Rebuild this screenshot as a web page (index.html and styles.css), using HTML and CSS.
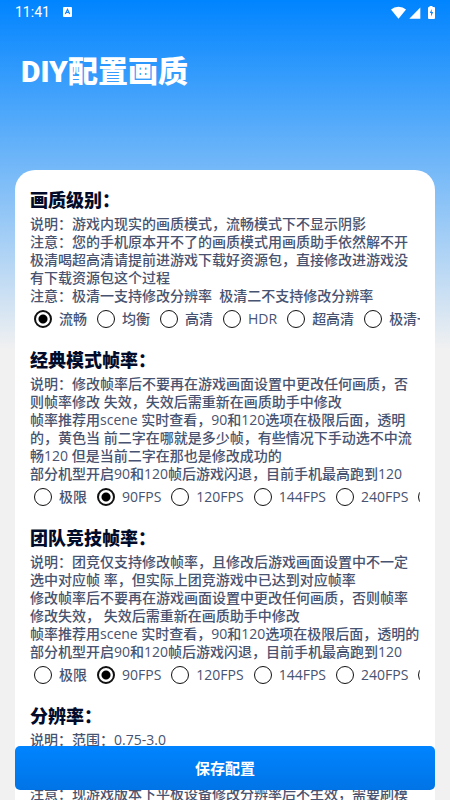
FILE: index.html
```html
<!DOCTYPE html>
<html lang="zh-CN">
<head>
    <meta charset="UTF-8">
    <meta name="viewport" content="width=device-width, initial-scale=1.0">
    <title>DIY配置画质</title>
    <link rel="stylesheet" href="styles.css">
</head>
<body>
<div class="app">
    <div class="status-bar">
        <span>11:41</span>
        <svg class="status-app" width="9" height="10" viewBox="0 0 9 10">
            <rect width="9" height="10" rx="1" fill="#fff"/>
            <path d="M2.3 7 4.5 2.4 6.7 7M3.2 5.5h2.6" fill="none" stroke="#1685f5" stroke-width="1.2"/>
        </svg>
        <svg class="status-icons" width="44" height="13" viewBox="0 0 44 13">
            <path d="M0 3.5Q3 .8 7.500.8T15 3.500L7.500 12.700Z" fill="#fff"/>
            <path d="M29.300 1.500V12.700H18.300Z" fill="#fff"/>
            <path d="M38.500 1V0h3v1h1.500q1 0 1 1v10q0 1-1 1h-5q-1 0-1-1V2q0-1 1-1Z" fill="#fff"/>
            <path d="M40.700 3 38.800 7h1.300v3.500L42.200 6h-1.500Z" fill="#1685f5"/>
        </svg>
    </div>

    <h1>DIY配置画质</h1>

    <form class="card">
        <section>
            <h2>画质级别：</h2>
            <p>说明：游戏内现实的画质模式，流畅模式下不显示阴影<br>
            注意：您的手机原本开不了的画质模式用画质助手依然解不开极清喝超高清请提前进游戏下载好资源包，直接修改进游戏没有下载资源包这个过程<br>
            注意：极清一支持修改分辨率&nbsp; 极清二不支持修改分辨率</p>
            <div class="options">
                <label><input type="radio" name="quality" checked>流畅</label>
                <label><input type="radio" name="quality">均衡</label>
                <label><input type="radio" name="quality">高清</label>
                <label><input type="radio" name="quality">HDR</label>
                <label><input type="radio" name="quality">超高清</label>
                <label><input type="radio" name="quality">极清一</label>
            </div>
        </section>

        <section>
            <h2>经典模式帧率：</h2>
            <p>说明：修改帧率后不要再在游戏画面设置中更改任何画质，否则帧率修改 失效，失效后需重新在画质助手中修改<br>
            帧率推荐用scene 实时查看，90和120选项在极限后面，透明的，黄色当 前二字在哪就是多少帧，有些情况下手动选不中流畅120 但是当前二字在那也是修改成功的<br>
            部分机型开启90和120帧后游戏闪退，目前手机最高跑到120</p>
            <div class="options">
                <label><input type="radio" name="classic">极限</label>
                <label><input type="radio" name="classic" checked>90FPS</label>
                <label><input type="radio" name="classic">120FPS</label>
                <label><input type="radio" name="classic">144FPS</label>
                <label><input type="radio" name="classic">240FPS</label>
                <label><input type="radio" name="classic"></label>
            </div>
        </section>

        <section>
            <h2>团队竞技帧率：</h2>
            <p>说明：团竞仅支持修改帧率，且修改后游戏画面设置中不一定选中对应帧 率，但实际上团竞游戏中已达到对应帧率<br>
            修改帧率后不要再在游戏画面设置中更改任何画质，否则帧率修改失效， 失效后需重新在画质助手中修改<br>
            帧率推荐用scene 实时查看，90和120选项在极限后面，透明的<br>
            部分机型开启90和120帧后游戏闪退，目前手机最高跑到120</p>
            <div class="options">
                <label><input type="radio" name="team">极限</label>
                <label><input type="radio" name="team" checked>90FPS</label>
                <label><input type="radio" name="team">120FPS</label>
                <label><input type="radio" name="team">144FPS</label>
                <label><input type="radio" name="team">240FPS</label>
                <label><input type="radio" name="team"></label>
            </div>
        </section>

        <section>
            <h2>分辨率：</h2>
            <p class="range">说明：范围：0.75-3.0</p>
            <p>注意：现游戏版本下平板设备修改分辨率后不生效，需要刷模</p>
        </section>

        <button class="save" type="button">保存配置</button>
    </form>
</div>
</body>
</html>
```

FILE: styles.css
```css
* { box-sizing: border-box; }
body { margin: 0; background: #f1f1f1; color: #475370; font: 500 14px/18px "Open Sans", "Noto Sans CJK SC", sans-serif; }

/* the whole screen scrolls, the save button stays */
.app { height: 100vh; overflow-y: auto; scrollbar-width: none; background: linear-gradient(#0084ff, #f1f1f1 350px); }

.status-bar { display: flex; align-items: center; height: 24px; padding: 0 15px; color: #fff; font: 400 14px/24px Roboto, sans-serif; }
.status-app { margin-left: 13px; }
.status-icons { margin-left: auto; }

h1 { margin: 28px 21px 78px; color: #fff; font: 900 30px/40px Roboto, "Noto Sans CJK SC", sans-serif; }

.card { margin: 0 15px; padding: 18px 15px 70px; background: #fff; border-radius: 20px 20px 0 0; }
section { margin-bottom: 15px; }
h2 { margin: 0 0 3px; color: #020b29; font-size: 18px; line-height: 24px; font-weight: 900; }
p { margin: 0; }
.range { margin-bottom: 36px; }

/* radio rows */
.options { display: flex; gap: 10px; height: 28px; padding-left: 4px; overflow-x: auto; scrollbar-width: none; }
.options label { display: flex; align-items: center; gap: 7px; flex: none; }
.options input { appearance: none; width: 18px; height: 18px; margin: 0; border: 1px solid #111; border-radius: 50%; background: #fff; }
.options input:checked { border-width: 2px; background: radial-gradient(circle, #000 4px, #fff 5px); }

.save { position: fixed; left: 15px; right: 15px; bottom: 10px; height: 44px; border: 0; border-radius: 5px; background: linear-gradient(#0084ff, #0074e6); color: #fff; font: 700 15px/20px "Noto Sans CJK SC", sans-serif; cursor: pointer; }
```
